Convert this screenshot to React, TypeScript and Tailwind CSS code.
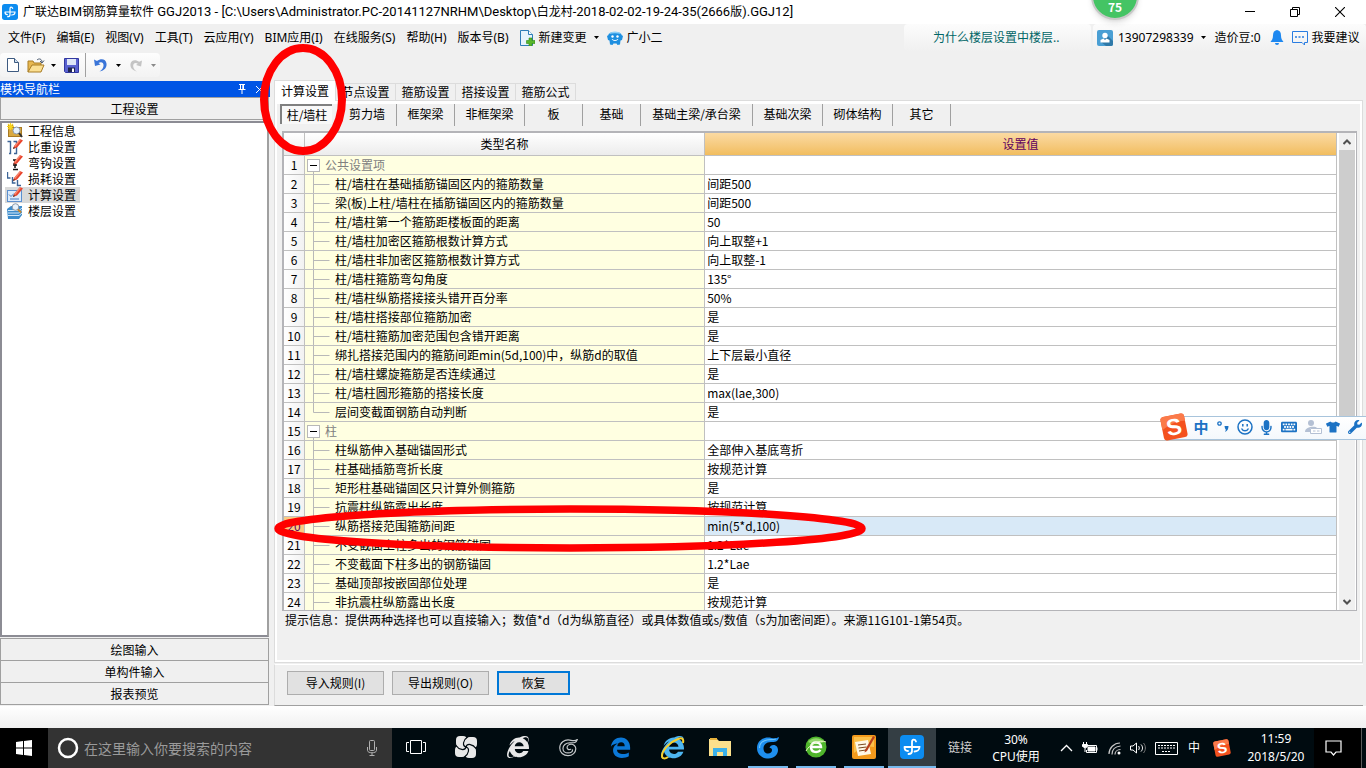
import { useState } from 'react';
import type { ReactNode } from 'react';
import { FaInternetExplorer, FaKeyboard, FaMicrophone, FaTshirt, FaWrench } from 'react-icons/fa';

const MENUS = [
  '文件(F)', '编辑(E)', '视图(V)', '工具(T)', '云应用(Y)', 'BIM应用(I)', '在线服务(S)', '帮助(H)', '版本号(B)',
];

const TABS = ['计算设置', '节点设置', '箍筋设置', '搭接设置', '箍筋公式'];

const SUB_TABS = [
  { label: '柱/墙柱', width: 'w-[58px]' },
  { label: '剪力墙', width: 'w-[59px]' },
  { label: '框架梁', width: 'w-[58px]' },
  { label: '非框架梁', width: 'w-[70px]' },
  { label: '板', width: 'w-[58px]' },
  { label: '基础', width: 'w-[58px]' },
  { label: '基础主梁/承台梁', width: 'w-[112px]' },
  { label: '基础次梁', width: 'w-[70px]' },
  { label: '砌体结构', width: 'w-[70px]' },
  { label: '其它', width: 'w-[58px]' },
];

interface SettingRow {
  name: string;
  value?: string;
  group?: boolean;
  last?: boolean;
}

const ROWS: SettingRow[] = [
  { name: '公共设置项', group: true },
  { name: '柱/墙柱在基础插筋锚固区内的箍筋数量', value: '间距500' },
  { name: '梁(板)上柱/墙柱在插筋锚固区内的箍筋数量', value: '间距500' },
  { name: '柱/墙柱第一个箍筋距楼板面的距离', value: '50' },
  { name: '柱/墙柱加密区箍筋根数计算方式', value: '向上取整+1' },
  { name: '柱/墙柱非加密区箍筋根数计算方式', value: '向上取整-1' },
  { name: '柱/墙柱箍筋弯勾角度', value: '135°' },
  { name: '柱/墙柱纵筋搭接接头错开百分率', value: '50%' },
  { name: '柱/墙柱搭接部位箍筋加密', value: '是' },
  { name: '柱/墙柱箍筋加密范围包含错开距离', value: '是' },
  { name: '绑扎搭接范围内的箍筋间距min(5d,100)中，纵筋d的取值', value: '上下层最小直径' },
  { name: '柱/墙柱螺旋箍筋是否连续通过', value: '是' },
  { name: '柱/墙柱圆形箍筋的搭接长度', value: 'max(lae,300)' },
  { name: '层间变截面钢筋自动判断', value: '是', last: true },
  { name: '柱', group: true },
  { name: '柱纵筋伸入基础锚固形式', value: '全部伸入基底弯折' },
  { name: '柱基础插筋弯折长度', value: '按规范计算' },
  { name: '矩形柱基础锚固区只计算外侧箍筋', value: '是' },
  { name: '抗震柱纵筋露出长度', value: '按规范计算' },
  { name: '纵筋搭接范围箍筋间距', value: 'min(5*d,100)' },
  { name: '不变截面上柱多出的钢筋锚固', value: '1.2*Lae' },
  { name: '不变截面下柱多出的钢筋锚固', value: '1.2*Lae' },
  { name: '基础顶部按嵌固部位处理', value: '是' },
  { name: '非抗震柱纵筋露出长度', value: '按规范计算' },
];

const Caret = ({ className = 'text-black' }: { className?: string }) => (
  <svg width="5" height="3" viewBox="0 0 5 3" className={className}>
    <path d="M0 0h5L2.5 3z" fill="currentColor" />
  </svg>
);

const AppLogo = ({ size }: { size: number }) => (
  <svg width={size} height={size} viewBox="0 0 24 24">
    <rect width="24" height="24" rx="4" fill="#0c8cf0" />
    <path
      d="M16 6.500C15 4 12 4 12 7v9c0 2-1.500 3-3.500 3M4.500 12h15c0 3-2.500 4.500-5 4.500M4.500 12c0 2.500 1.500 4 3.500 4"
      fill="none"
      stroke="#fff"
      strokeWidth="1.800"
      strokeLinecap="round"
    />
  </svg>
);

const SogouLogo = ({ size }: { size: number }) => (
  <svg width={size} height={size} viewBox="0 0 28 28">
    <g transform="rotate(-11 14 14)">
      <rect x="2" y="2" width="24" height="24" rx="3" fill="#f4511e" />
      <path d="M2 5a3 3 0 0 1 3-3h18a3 3 0 0 1 3 3v5C18 8 10 11 2 15z" fill="#fb7a4a" />
      <text x="14" y="22" textAnchor="middle" fontSize="23" fontWeight="700" fill="#fff" fontFamily="Liberation Sans, sans-serif">S</text>
    </g>
  </svg>
);

const TitleBar = () => (
  <header className="flex h-6 shrink-0 items-center bg-white pl-[2px]">
    <AppLogo size={16} />
    <h1 className="ml-[5px] flex-1 truncate font-['Roboto','Noto_Sans_CJK_SC',sans-serif] text-[13px] leading-6">
      <span className="text-[12px]">广联达</span>BIM<span className="text-[12px]">钢筋算量软件</span>
      {' GGJ2013 - [C:\\Users\\Administrator.PC-20141127NRHM\\Desktop\\'}
      <span className="text-[12px]">白龙村</span>-2018-02-02-19-24-35(2666<span className="text-[12px]">版</span>).GGJ12]
    </h1>
    <div className="flex">
      <button type="button" aria-label="最小化" className="flex h-6 w-[45px] items-center justify-center">
        <svg width="10" height="10" viewBox="0 0 10 10"><path d="M0 4.500h10" stroke="#000" /></svg>
      </button>
      <button type="button" aria-label="还原" className="flex h-6 w-[45px] items-center justify-center">
        <svg width="10" height="10" viewBox="0 0 10 10" fill="none" stroke="#000">
          <path d="M.5 2.500h7v7h-7zM2.500 2.500v-2h7v7h-2" />
        </svg>
      </button>
      <button type="button" aria-label="关闭" className="mr-1 flex h-6 w-[45px] items-center justify-center">
        <svg width="10" height="10" viewBox="0 0 10 10"><path d="M0 0l10 10M10 0L0 10" stroke="#000" strokeWidth="1.100" /></svg>
      </button>
    </div>
  </header>
);

const MenuBar = () => (
  <nav className="flex h-[27px] shrink-0 items-center whitespace-nowrap pl-2 font-['Noto_Sans','Noto_Sans_CJK_SC',sans-serif] text-[12px]">
    <div className="flex gap-[11px]">
      {MENUS.map((menu) => (
        <button key={menu} type="button">{menu}</button>
      ))}
    </div>
    <button type="button" className="ml-[11px] flex items-center">
      <svg width="15" height="16" viewBox="0 0 15 16">
        <path d="M.5.500h8l4 4v11H.5z" fill="#e6f3fc" stroke="#2d7db8" />
        <path d="M8.500.500v4h4" fill="#fff" stroke="#2d7db8" />
        <path d="M9 8h3v2.500h3v3h-3V16H9v-2.500H6.500v-3H9z" fill="#58b52a" stroke="#2f8a14" strokeWidth=".6" />
      </svg>
      <span className="ml-1 mr-[7px]">新建变更</span>
      <Caret />
    </button>
    <button type="button" className="ml-2 flex items-center gap-1">
      <svg width="16" height="16" viewBox="0 0 16 16">
        <path d="M1.500 5C1 1 15 1 14.500 5l1.500 1-1 4-1.500.5-.5 4-2.500.5-1-1.500h-3l-1 1.500-2.500-.5-.5-4L1 10 0 6z" fill="#1e8fe0" />
        <path d="M2 4C3 .5 13 .5 14 4 10 3 6 3 2 4z" fill="#8ed0f7" />
        <circle cx="5.500" cy="6.500" r="1.200" fill="#fff" />
        <circle cx="10.500" cy="6.500" r="1.200" fill="#fff" />
        <path d="M5 9c1 2 5 2 6 0" fill="none" stroke="#fff" />
      </svg>
      广小二
    </button>
    <div className="ml-auto flex h-full items-center gap-[2px]">
      <a href="#help" className="flex h-full w-[187px] items-center rounded bg-linear-to-b from-[#fcfcfc] to-[#f0f0f0] pl-[29px] text-[#006666]">
        为什么楼层设置中楼层..
      </a>
      <div className="flex h-full w-[273px] items-center rounded bg-linear-to-b from-[#fcfcfc] to-[#f0f0f0] pl-1">
        <button type="button" className="flex items-center">
          <svg width="16" height="16" viewBox="0 0 16 16">
            <rect width="16" height="16" rx="2" fill="#4a9fd4" />
            <path d="M11 6l5 5v3a2 2 0 0 1-2 2H9l-5-4z" fill="#2f79a8" />
            <circle cx="8" cy="5.500" r="2.700" fill="#fff" />
            <path d="M3.500 12.500V10l3-1.500L8 10l1.500-1.500 3 1.500v2.500z" fill="#fff" />
          </svg>
          <span className="ml-[5px] mr-[7px]">13907298339</span>
          <Caret />
        </button>
        <span className="ml-[9px]">造价豆:0</span>
        <button type="button" aria-label="通知" className="ml-[9px]">
          <svg width="14" height="15" viewBox="0 0 14 15" fill="#1e88f0">
            <path d="M7 0c3 .5 4 2.500 4 5.500 0 3 1 4.500 2.500 6.500H.5C2 10 3 8.500 3 5.500 3 2.500 4 .5 7 0z" />
            <path d="M5 13h4a2 2 0 0 1-4 0z" />
          </svg>
        </button>
        <button type="button" className="ml-2 flex items-center gap-1">
          <svg width="16" height="16" viewBox="0 0 16 16" fill="none" stroke="#2a7de1">
            <path d="M.5 1.500h15v11h-3v2.500l-2.500-2.500H.5z" />
            <path d="M3 7h10" strokeDasharray="2 1.500" strokeWidth="1.500" />
          </svg>
          我要建议
        </button>
      </div>
    </div>
  </nav>
);

const Toolbar = () => (
  <div className="flex h-7 shrink-0 items-center">
    <div className="flex h-6 w-[160px] items-center rounded bg-linear-to-b from-[#fdfdfd] to-[#f3f3f3] pl-[7px]">
      <button type="button" aria-label="新建">
        <svg width="12" height="14" viewBox="0 0 12 14"><path d="M.5.500h7l4 4v9H.5z" fill="#fff" stroke="#3d5a80" /><path d="M7.500.500v4h4" fill="#cfe0f2" stroke="#3d5a80" /></svg>
      </button>
      <button type="button" aria-label="打开" className="ml-2 flex items-center gap-[6px]">
        <svg width="18" height="15" viewBox="0 0 18 15">
          <path d="M1 14V3h5l1 2h7v3" fill="#e8b850" stroke="#a87c24" />
          <path d="M1 14L5 7h12l-3 7z" fill="#fbdf92" stroke="#a87c24" />
          <path d="M10 2c2-2 5-1 5 2M13 3l2 2 2-2.500" fill="none" stroke="#4a5a70" />
        </svg>
        <Caret />
      </button>
      <button type="button" aria-label="保存" className="ml-2">
        <svg width="15" height="15" viewBox="0 0 15 15">
          <path d="M.5.500h14v14h-13l-1-1z" fill="#5a62d0" stroke="#3238a0" />
          <path d="M3 1h9v6H3z" fill="#dfe6f7" />
          <path d="M4 9.500h7V14H4z" fill="#20264f" />
          <path d="M8 10.500h2V14H8z" fill="#fff" />
        </svg>
      </button>
      <span className="ml-[6px] h-6 w-px bg-[#a0a0a0]" />
      <button type="button" aria-label="撤销" className="ml-2 flex items-center gap-[9px]">
        <svg width="13" height="14" viewBox="0 0 13 14">
          <path d="M0 1.500L1 8l5.500-1.500-2-1.500c3-2 5.500 0 5 3-.3 2-1.500 4-4 5.500 5-1 7.500-4 7-8C12 1 7 0 3 3z" fill="#3a75d8" />
        </svg>
        <Caret />
      </button>
      <button type="button" aria-label="重做" className="ml-[9px] flex items-center gap-[9px]">
        <svg width="12" height="13" viewBox="0 0 13 14">
          <path d="M13 1.500L12 8 6.500 6.500l2-1.500c-3-2-5.500 0-5 3 .3 2 1.500 4 4 5.500-5-1-7.500-4-7-8C1 1 6 0 10 3z" fill="#c4c4c4" />
        </svg>
        <Caret className="text-[#8a8a8a]" />
      </button>
    </div>
  </div>
);

const Pencil = () => (
  <g>
    <path d="M6 10l1-3 6-7 3 1.500-6 7z" fill="#e8432c" />
    <path d="M7 7l6-7 1.200.6-6 7.400z" fill="#f78a72" />
    <path d="M6 10l.6-2 1.500 1z" fill="#333" />
  </g>
);

const NAV_ITEMS: { label: string; icon: ReactNode }[] = [
  {
    label: '工程信息',
    icon: (
      <>
        <path d="M1 2h5l1 2h8v10H1z" fill="#a87a24" />
        <path d="M2 5h12v8H2z" fill="#d9a942" />
        <path d="M3.500 0v7M0 3.500h7M1 1l5 5M6 1L1 6" stroke="#f8d31c" strokeWidth="1.200" />
        <circle cx="9.500" cy="7.500" r="3.500" fill="#e6f2fc" stroke="#8c98a8" />
        <path d="M12 10l3 4" stroke="#333" strokeWidth="2" />
      </>
    ),
  },
  {
    label: '比重设置',
    icon: (
      <>
        <path d="M.5 2.500h3v12h-1.500M6.500 2.500h3v12H7" fill="none" stroke="#3d6496" strokeWidth="1.400" />
        <Pencil />
      </>
    ),
  },
  {
    label: '弯钩设置',
    icon: (
      <>
        <path d="M6 5h3M8 5v8M6 10h4M6 14.500h5" fill="none" stroke="#111" strokeWidth="1.500" />
        <Pencil />
      </>
    ),
  },
  {
    label: '损耗设置',
    icon: (
      <>
        <path d="M.5 1v6h3M5.500 6v6h3M10.500 9v5.500H14" fill="none" stroke="#3d6496" strokeWidth="1.400" />
        <Pencil />
      </>
    ),
  },
  {
    label: '计算设置',
    icon: (
      <>
        <rect x=".5" y="3.500" width="14" height="11" fill="#dcebfb" stroke="#5b8fcf" />
        <path d="M2 7.500l2 2 3-3M3 12h9" fill="none" stroke="#4a7cc0" />
        <Pencil />
      </>
    ),
  },
  {
    label: '楼层设置',
    icon: (
      <>
        <path d="M0 6l4-3h11v9l-3 4H1z" fill="#3d8ccc" />
        <path d="M1 7.500h11l3-2.500M1 10h11l3-2.500M1 12.500h11l3-2.500" fill="none" stroke="#d4e8f8" />
        <circle cx="8.500" cy="4" r="3.300" fill="#e6f2fc" stroke="#8c98a8" />
        <path d="M11 6.500l3 3" stroke="#c8862c" strokeWidth="2" />
      </>
    ),
  },
];

const Sidebar = () => {
  const [current, setCurrent] = useState('计算设置');

  return (
    <aside className="flex w-[270px] shrink-0 flex-col pt-[2px]">
      <div className="flex h-4 items-center bg-[#0055e5] pr-[7px] text-white">
        <h2 className="flex-1 text-[12px] leading-4">模块导航栏</h2>
        <button type="button" aria-label="固定">
          <svg width="8" height="10" viewBox="0 0 8 10" fill="none" stroke="#fff"><path d="M1 .5h6M2.500.500v5M5.500.500v5M4.800.500v5M.5 5.500h7M4 6v4" /></svg>
        </button>
        <button type="button" aria-label="关闭导航栏" className="ml-[10px]">
          <svg width="7" height="7" viewBox="0 0 7 7" stroke="#fff"><path d="M0 0l7 7M7 0L0 7" /></svg>
        </button>
      </div>
      <div className="mr-px flex flex-1 flex-col pb-px">
        <button type="button" className="h-[23px] shrink-0 border border-[#a0a0a0] bg-[#f0f0f0] text-[12px] leading-[22px]">工程设置</button>
        <ul className="mb-px mt-px flex-1 border-2 border-[#8c8c94] border-r-[#a0a0a0] bg-white pl-[3px]">
          {NAV_ITEMS.map((item) => (
            <li key={item.label}>
              <button
                type="button"
                onClick={() => setCurrent(item.label)}
                className={`flex h-4 items-center gap-[5px] pl-[2px] pr-1 text-[12px] leading-4 ${current === item.label ? 'bg-[#d9d9d9]' : ''}`}
              >
                <svg width="16" height="16" viewBox="0 0 16 16">{item.icon}</svg>
                {item.label}
              </button>
            </li>
          ))}
        </ul>
        <div className="flex shrink-0 flex-col border-t border-[#a0a0a0]">
          {['绘图输入', '单构件输入', '报表预览'].map((label) => (
            <button key={label} type="button" className="h-[22px] border border-t-0 border-[#a0a0a0] bg-[#f0f0f0] text-[12px] leading-5">
              {label}
            </button>
          ))}
        </div>
      </div>
    </aside>
  );
};

const TreeGuide = ({ row }: { row: SettingRow }) => (
  <svg width="30" height="19" viewBox="0 0 30 19" className="shrink-0" fill="none" stroke="#b8b8b8">
    {row.group ? (
      <>
        <path d="M8.500 16v3" />
        <rect x="2.500" y="3.500" width="12" height="12" fill="#fff" />
        <path d="M5 9.500h7" stroke="#000" />
      </>
    ) : (
      <path d={row.last ? 'M8.500 0v9.500h16' : 'M8.500 0v19M8.500 9.500h16'} />
    )}
  </svg>
);

const SettingsTable = () => {
  const [selected, setSelected] = useState(19);

  return (
    <div className="ml-[5px] mr-[3px] flex min-h-0 flex-1 border-2 border-b border-r border-[#b4b4b8] bg-white">
      <div className="h-0 min-h-full flex-1 overflow-hidden">
        <table className="w-full table-fixed border-separate border-spacing-0 text-[12px]">
          <thead>
            <tr className="h-[23px] leading-[22px]">
              <th className="w-[21px] border-b border-r border-[#c0c0c0] bg-linear-to-b from-white to-[#ececec] p-0" />
              <th className="w-[38%] border-b border-r border-[#c0c0c0] bg-linear-to-b from-white to-[#ececec] p-0 font-normal">类型名称</th>
              <th className="border-b border-r border-[#c0c0c0] bg-linear-to-b from-[#fbdaa2] to-[#f1bd5e] p-0 font-normal text-[#600060]">设置值</th>
            </tr>
          </thead>
          <tbody>
            {ROWS.map((row, index) => {
              const isSelected = index === selected;
              return (
                <tr key={index} onClick={() => setSelected(index)} className="h-[19px] leading-[18px]">
                  <td className={`border-b border-r border-[#c0c0c0] p-0 text-center ${isSelected ? 'bg-[#f9cb83] text-[#600060]' : 'bg-linear-to-r from-white to-[#f2f2f2]'}`}>
                    {index + 1}
                  </td>
                  <td className="border-b border-r border-[#c0c0c0] bg-[#ffffe1] p-0">
                    <div className="flex h-[18px] items-start overflow-hidden whitespace-nowrap">
                      <TreeGuide row={row} />
                      <span className={row.group ? 'ml-[-10px] text-[#808080]' : ''}>{row.name}</span>
                    </div>
                  </td>
                  <td className={`border-b border-r border-[#c0c0c0] py-0 pl-[2px] pr-0 ${isSelected ? 'bg-[#d8e9f7]' : 'bg-white'}`}>
                    {row.value}
                  </td>
                </tr>
              );
            })}
          </tbody>
        </table>
      </div>
      <div className="ml-[2px] mr-px flex w-4 flex-col bg-[#f0f0f0]">
        <button type="button" aria-label="向上滚动" className="flex h-[17px] items-center justify-center">
          <svg width="8" height="6" viewBox="0 0 8 6" fill="none" stroke="#505050" strokeWidth="2"><path d="M.5 5L4 1.500 7.500 5" /></svg>
        </button>
        <div className="h-[60%] bg-[#cdcdcd]" />
        <button type="button" aria-label="向下滚动" className="mt-auto flex h-[17px] items-center justify-center">
          <svg width="8" height="6" viewBox="0 0 8 6" fill="none" stroke="#505050" strokeWidth="2"><path d="M.5 1L4 4.500 7.500 1" /></svg>
        </button>
      </div>
    </div>
  );
};

const SettingsPanel = () => {
  const [tab, setTab] = useState(TABS[0]);
  const [subTab, setSubTab] = useState(SUB_TABS[0].label);

  return (
    <section className="ml-1 mr-[3px] flex min-w-0 flex-1 flex-col">
      <div className="flex h-[21px] shrink-0 items-end">
        {TABS.map((label) => (
          <button
            key={label}
            type="button"
            onClick={() => setTab(label)}
            className={
              tab === label
                ? 'relative -mb-px h-[21px] w-[62px] border border-b-0 border-[#dcdcdc] bg-white text-[12px] leading-4'
                : 'h-[17px] w-[60px] border border-b-0 border-l-0 border-[#dcdcdc] bg-[#f0f0f0] text-[12px] leading-4'
            }
          >
            {label}
          </button>
        ))}
      </div>
      <div className="flex min-h-0 flex-1 flex-col border border-[#dcdcdc] bg-white p-[2px] pt-[3px]">
        <div className="flex min-h-0 flex-1 flex-col bg-[#f0f0f0]">
          <div className="mb-[5px] flex h-[22px] shrink-0 pl-[3px]">
            {SUB_TABS.map(({ label, width }) => (
              <div key={label} className={`flex ${width} ${subTab === label ? 'pr-[6px]' : 'border-r border-[#a0a0a0]'}`}>
                <button
                  type="button"
                  onClick={() => setSubTab(label)}
                  className={`h-5 flex-1 whitespace-nowrap text-[12px] leading-4 ${subTab === label ? 'border-l-2 border-t-2 border-[#808080] bg-[#f8f8f8]' : ''}`}
                >
                  {label}
                </button>
              </div>
            ))}
          </div>
          <SettingsTable />
          <p className="h-[49px] shrink-0 px-2 text-[12px] leading-[18px]">
            提示信息：提供两种选择也可以直接输入；数值*d（d为纵筋直径）或具体数值或s/数值（s为加密间距）。来源11G101-1第54页。
          </p>
        </div>
      </div>
      <div className="mt-px flex h-[42px] shrink-0 items-start gap-2 border-b border-l border-t border-[#a0a0a0] border-t-white border-l-[#dcdcdc] pl-3 pt-[6px] text-[12px]">
        <button type="button" className="h-6 w-[97px] border border-[#adadad] bg-[#e1e1e1]">导入规则(I)</button>
        <button type="button" className="h-6 w-[97px] border border-[#adadad] bg-[#e1e1e1]">导出规则(O)</button>
        <button type="button" className="h-6 w-[73px] border-2 border-[#0078d7] bg-[#e1e1e1]">恢复</button>
      </div>
    </section>
  );
};

const ThinSwirl = () => (
  <svg width="22" height="22" viewBox="0 0 24 24" fill="none" stroke="#c4c8ca" strokeWidth="1.300" strokeLinecap="round">
    <path d="M22 4c-2 2-5 1-8 .5C8 3.500 3 7.500 3 13c0 5 4 8.500 9 8.500s8.500-3.500 8.500-7.500c0-3-2.500-5-5-5-3 0-4.500 2-4.500 3.500 0 2 2 3 4 2" />
    <path d="M22 4c-1 4-4 3.500-8 3.500-4.500 0-7.500 2.500-7.500 6 0 3 2.500 5 5.500 5s5-1.500 5-3.500" />
  </svg>
);

const BlueSwirl = () => (
  <svg width="24" height="24" viewBox="0 0 24 24">
    <path d="M23 2c-1 5-4 5-8 5-5 0-7.500 3-7.500 6.500 0 3 2 5 4.500 5s4-1.500 4-3.500c0-1.500-1-2-2.500-2 .5-2 2-3 4-3 3 0 4.500 2.500 4.500 5 0 4.500-4 8.500-9.500 8.500C6 23.500 1 19.500 1 13 1 6.500 6 2.500 12 2.500c4 0 7 2 11-.5z" fill="#1e8fee" />
    <path d="M20 4c-3 1-6 .5-9 1C6 6 3.500 9 3.500 13" fill="none" stroke="#6fc4fa" strokeWidth="1.200" />
  </svg>
);

const TASKS: { name: string; width: string; state?: 'open' | 'active'; icon: ReactNode }[] = [
  {
    name: '任务视图',
    width: 'w-12',
    icon: (
      <svg width="20" height="14" viewBox="0 0 20 14" fill="none" stroke="#fff">
        <path d="M4.500.500h11v13h-11zM3 2.500H.5v9H3M17 2.500h2.500v9H17" />
      </svg>
    ),
  },
  {
    name: '云盘',
    width: 'w-[52px]',
    icon: (
      <svg width="22" height="22" viewBox="0 0 22 22">
        <rect x="1" y="0" width="11" height="11" rx="4" fill="#e8e8e8" />
        <rect x="11" y="1" width="11" height="11" rx="4" fill="#e8e8e8" />
        <rect x="10" y="11" width="11" height="11" rx="4" fill="#e8e8e8" />
        <rect x="0" y="10" width="11" height="11" rx="4" fill="#e8e8e8" />
        <path d="M11 11C7 10 8 4 12.500 1M11 11c1-4 7-3 10 1.500M11 11c4 1 3 7-1.500 10M11 11c-1 4-7 3-10-1.500" fill="none" stroke="#000b10" strokeWidth="1.200" />
      </svg>
    ),
  },
  { name: '浏览器', width: 'w-[52px]', icon: <FaInternetExplorer size={22} color="#e8e8e8" /> },
  { name: '广联达G', width: 'w-12', icon: <ThinSwirl /> },
  {
    name: 'Edge',
    width: 'w-14',
    icon: (
      <svg width="21" height="21" viewBox="0 0 24 24" fill="#0b78d7">
        <path
          fillRule="evenodd"
          d="M1 11C2 4 7 .5 12.500.500 19 .5 23 5.500 23 12v2.500H8c0 3.500 3.500 5 7 5 2.500 0 4.500-.7 6.500-1.800V22c-2 1.200-5 2-8 2C7 24 3.500 20 3.500 15.500c0-4 2.500-7 5.500-8-3.500 0-6.500 1.500-8 3.500zM8.300 10.500h8.500c0-3-1.500-4.500-4-4.500s-4.200 1.800-4.500 4.500z"
        />
      </svg>
    ),
  },
  {
    name: 'Internet Explorer',
    width: 'w-12',
    icon: (
      <span className="relative">
        <FaInternetExplorer size={23} color="#4db5f0" />
        <svg width="25" height="24" viewBox="0 0 25 24" className="absolute -left-px top-0" fill="none" stroke="#f8cf2c" strokeWidth="2">
          <path d="M23 7c1-4-1-6-5-4C10 6 2 14 2 20c0 3 3 3 6 1" />
        </svg>
      </span>
    ),
  },
  {
    name: '文件资源管理器',
    width: 'w-12',
    icon: (
      <svg width="22" height="19" viewBox="0 0 22 19">
        <path d="M0 1h8l2 2h12v15H0z" fill="#fbe08c" />
        <path d="M1 0h7v2H1z" fill="#e8b33c" />
        <path d="M4 10h14v8h-4v-4H8v4H4z" fill="#3bb0e8" />
      </svg>
    ),
  },
  { name: '广联达', width: 'w-12', state: 'open', icon: <BlueSwirl /> },
  {
    name: '安全浏览器',
    width: 'w-12',
    state: 'open',
    icon: (
      <svg width="22" height="22" viewBox="0 0 22 22">
        <circle cx="11" cy="11" r="10.500" fill="#4fb52c" />
        <path d="M3 6c4-5 12-5 16 0-5 2-11 2-16 0z" fill="#93d96c" />
        <path d="M6 11h10c0-6-10-6-10 0s7 6 9.500 3" fill="none" stroke="#fff" strokeWidth="2.500" />
        <path d="M1 15C4 9 14 3 21 6" fill="none" stroke="#e8f7c0" />
      </svg>
    ),
  },
  {
    name: '写字板',
    width: 'w-12',
    state: 'open',
    icon: (
      <svg width="24" height="24" viewBox="0 0 24 24">
        <rect width="24" height="24" rx="2" fill="#f39a1c" />
        <path d="M2 2h20v10C14 10 8 14 2 18z" fill="#fbc04a" />
        <path d="M3 7l13-2 3 14-13 2z" fill="#fff8e6" />
        <path d="M6 10l8-1M6.500 13l8-1M7 16l7-1" stroke="#7a4a20" />
        <path d="M13 15l8-14 2 1-8 14-2.500 1.500z" fill="#b8401c" />
      </svg>
    ),
  },
  { name: '广联达BIM钢筋算量软件', width: 'w-12', state: 'active', icon: <AppLogo size={24} /> },
];

const Taskbar = () => (
  <footer className="flex h-10 shrink-0 items-stretch bg-[#000b10] font-['Noto_Sans','Noto_Sans_CJK_SC',sans-serif] text-[12px] text-white">
    <button type="button" aria-label="开始" className="flex w-12 items-center justify-center bg-black">
      <svg width="16" height="16" viewBox="0 0 16 16" fill="#fff"><path d="M0 2l7-1v6.500H0zM8 1l8-1v7.500H8zM0 8.500h7V15l-7-1zM8 8.500h8V16l-8-1z" /></svg>
    </button>
    <label className="flex w-[344px] items-center bg-[#333] pl-[9px] pr-[14px]">
      <svg width="22" height="22" viewBox="0 0 22 22"><circle cx="11" cy="11" r="9" fill="none" stroke="#fff" strokeWidth="2.500" /></svg>
      <input aria-label="搜索" placeholder="在这里输入你要搜索的内容" className="ml-[5px] min-w-0 flex-1 bg-transparent text-[14px] outline-none placeholder:text-[#9a9a9a]" />
      <svg width="12" height="16" viewBox="0 0 12 16" fill="none" stroke="#b0b0b0">
        <rect x="3.500" y=".5" width="5" height="10" rx="1" />
        <path d="M1.500 7v3.500c0 3 9 3 9 0V7M6 13v2.500M3.500 15.500h5" />
      </svg>
    </label>
    {TASKS.map(({ name, width, state, icon }) => (
      <button
        key={name}
        type="button"
        aria-label={name}
        className={`${width} flex flex-col items-center ${state === 'active' ? 'bg-[#343e44]' : ''}`}
      >
        <span className="flex h-[38px] items-center">{icon}</span>
        {state && <span className={`h-[2px] bg-[#76b9ed] ${state === 'active' ? 'w-full' : 'w-10'}`} />}
      </button>
    ))}
    <span className="flex w-12 items-center justify-center text-[#d0d0d0]">链接</span>
    <span className="flex w-16 flex-col items-center justify-center leading-[17px]">
      <span>30%</span>
      <span>CPU使用</span>
    </span>
    <div className="ml-auto flex items-center">
      <button type="button" aria-label="显示隐藏的图标" className="flex w-6 justify-center">
        <svg width="13" height="8" viewBox="0 0 13 8" fill="none" stroke="#fff" strokeWidth="1.300"><path d="M1 7l5.500-5.500L12 7" /></svg>
      </button>
      <span className="flex w-6 justify-center">
        <svg width="16" height="12" viewBox="0 0 16 12" fill="none" stroke="#fff">
          <path d="M5 3.500h9.500v7H4.500V8" />
          <path d="M6 5h7v4H6zM15 5.500v3" fill="#fff" />
          <path d="M1.500 0v2M4.500 0v2M.5 2.500h5v2l-2 1.500-3-1.500zM3 6v4" fill="#fff" />
        </svg>
      </span>
      <span className="flex w-6 justify-center">
        <svg width="13" height="13" viewBox="0 0 13 13" fill="none" stroke="#c8c8c8" strokeWidth="1.200">
          <path d="M1 12C1 6 6 1 12 1M4 12.500c0-5 3-8 8.500-8.500M7 12.500C7 10 9 7.500 12.500 7.500" />
          <circle cx="11" cy="11" r="1.500" fill="#fff" stroke="none" />
        </svg>
      </span>
      <span className="flex w-6 justify-center">
        <svg width="17" height="12" viewBox="0 0 17 12" fill="none" stroke="#fff">
          <path d="M.5 4v4h2.500L6.500 11V1L3 4zM8.500 4c1 1 1 3 0 4M11 2.500c2 2 2 5 0 7" />
          <path d="M13.500 1c2.500 3 2.500 7 0 10" stroke="#777" />
        </svg>
      </span>
      <button type="button" aria-label="触摸键盘" className="flex w-8 justify-center">
        <svg width="23" height="13" viewBox="0 0 23 13" fill="none" stroke="#fff">
          <path d="M.5.500h22v12H.5z" />
          <path d="M3 3.500h17M3 6h17M7 9.500h9" strokeDasharray="2 1" />
        </svg>
      </button>
      <span className="w-6 text-center">中</span>
      <span className="flex w-8 justify-center"><SogouLogo size={18} /></span>
      <time className="w-[76px] text-center leading-[18px]">
        11:59
        <br />
        2018/5/20
      </time>
      <button type="button" aria-label="操作中心" className="flex h-full w-[47px] items-center bg-black pl-[11px]">
        <svg width="17" height="17" viewBox="0 0 17 17" fill="none" stroke="#fff" strokeWidth="1.200"><path d="M1 1h15v11h-5l-2.500 3L6 12H1z" /></svg>
      </button>
      <span className="mr-1 h-full w-px bg-[#5a5a5a]" />
    </div>
  </footer>
);

const ImeBar = () => (
  <div className="absolute right-0 top-[413px] z-20 flex h-[28px] w-[206px] items-center text-[#1c72c4]">
    <div className="absolute inset-x-0 left-2 top-[3px] h-6 border-y border-[#a8c4dc] bg-linear-to-b from-white to-[#f4f8fc]" />
    <div className="relative flex w-full items-center">
      <SogouLogo size={28} />
      <span className="ml-[5px] w-4 text-center text-[15px] font-bold leading-6">中</span>
      <svg width="12" height="12" viewBox="0 0 12 12" className="ml-2"><circle cx="2.500" cy="2.500" r="1.700" fill="none" stroke="currentColor" strokeWidth="1.300" /><path d="M7.500 5h4c0 3-1 5-3.500 6 1-2 1-3 0-3.500z" fill="currentColor" /></svg>
      <svg width="16" height="16" viewBox="0 0 16 16" fill="none" stroke="currentColor" strokeWidth="1.500" className="ml-2">
        <circle cx="8" cy="8" r="7" />
        <path d="M5.800 5v2.500M10.200 5v2.500M4.500 9.500c1.500 3 5.500 3 7 0" />
      </svg>
      <FaMicrophone size={15} className="ml-[6px]" />
      <FaKeyboard size={16} className="ml-[7px]" />
      <svg width="17" height="16" viewBox="0 0 17 16" className="ml-2 text-[#b4c0d4]">
        <circle cx="6" cy="4" r="3" fill="currentColor" />
        <path d="M0 13c0-6 11-6 12-4H5v4z" fill="currentColor" />
        <path d="M5.500 9.500h11v5h-11zM8 12h2.500M12 12h2.500" fill="#fff" stroke="currentColor" />
      </svg>
      <FaTshirt size={14} className="ml-1" />
      <FaWrench size={14} className="ml-2" />
    </div>
  </div>
);

// Red marker circles drawn by the user over the window.
const Markers = () => (
  <svg className="pointer-events-none absolute left-0 top-0 z-10" width="870" height="560" viewBox="0 0 870 560" fill="none" stroke="#f00">
    <ellipse cx="303" cy="99.500" rx="39" ry="51.500" strokeWidth="8" />
    <ellipse cx="570" cy="528.500" rx="292" ry="19.500" strokeWidth="7.500" />
  </svg>
);

export default function App() {
  return (
    <div className="relative flex h-screen flex-col overflow-hidden bg-[#f0f0f0] font-['Noto_Sans_CJK_SC',sans-serif] text-black">
      <TitleBar />
      <MenuBar />
      <Toolbar />
      <main className="flex min-h-0 flex-1">
        <Sidebar />
        <SettingsPanel />
      </main>
      <div className="h-[22px] shrink-0 bg-linear-to-b from-white to-[#f0f0f0]" />
      <Taskbar />
      <Markers />
      <ImeBar />
      <div className="absolute right-[227px] top-[-28px] z-20 flex h-12 w-12 items-end justify-center rounded-full border-2 border-[#c8c8c8] bg-[#44c464] pb-[3px] text-[12px] font-bold leading-4 text-white shadow-md">
        75
      </div>
    </div>
  );
}
